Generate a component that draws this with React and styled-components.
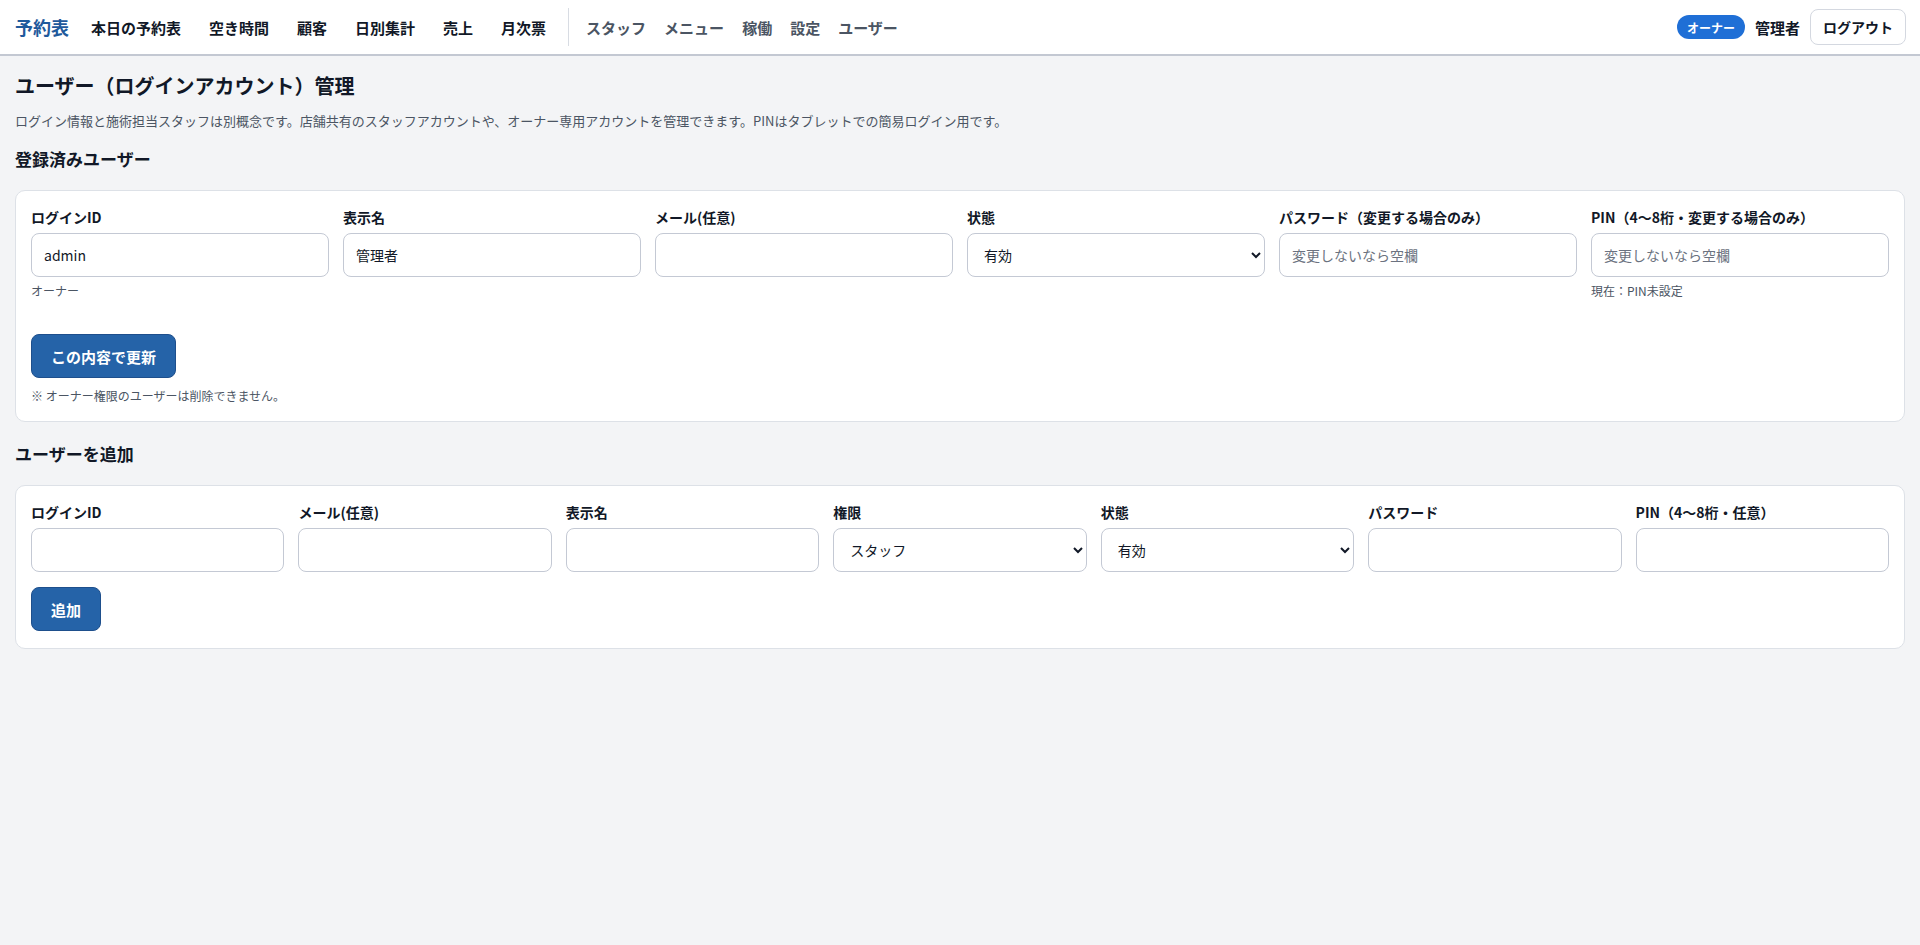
import React from "react";
import styled, { createGlobalStyle } from "styled-components";

const GlobalStyle = createGlobalStyle`
  * { box-sizing: border-box; }
  html, body {
    margin: 0;
    padding: 0;
    background: #f3f4f6;
    color: #1f2937;
    font-family: "Noto Sans CJK JP", "Noto Sans", sans-serif;
  }
`;

const Header = styled.header`
  display: flex;
  align-items: center;
  height: 56px;
  padding: 0 14px 0 15px;
  background: #ffffff;
  border-bottom: 2px solid #c3c8d2;
`;

const Brand = styled.div`
  font-size: 18px;
  font-weight: 700;
  color: #1f5a9c;
  margin-right: 8px;
  white-space: nowrap;
`;

const Nav = styled.nav`
  display: flex;
  align-items: center;
  align-self: stretch;
`;

const NavLink = styled.a`
  font-size: 15px;
  font-weight: 700;
  color: ${(p) => (p.$sub ? "#4b5563" : "#111827")};
  padding: 0 ${(p) => (p.$sub ? "9px" : "14px")};
  text-decoration: none;
  white-space: nowrap;
  cursor: pointer;
`;

const Divider = styled.span`
  width: 1px;
  height: 38px;
  background: #d8dce3;
  margin: 0 8px;
`;

const HeaderRight = styled.div`
  margin-left: auto;
  display: flex;
  align-items: center;
  gap: 10px;
`;

const RoleBadge = styled.span`
  display: inline-flex;
  align-items: center;
  height: 24px;
  padding: 0 10px;
  border-radius: 999px;
  background: #1f6fd6;
  color: #ffffff;
  font-size: 12px;
  font-weight: 700;
`;

const UserName = styled.span`
  font-size: 15px;
  font-weight: 700;
  color: #111827;
`;

const LogoutButton = styled.button`
  height: 36px;
  padding: 0 12px;
  border: 1px solid #d4d8e0;
  border-radius: 8px;
  background: #ffffff;
  font-family: inherit;
  font-size: 14px;
  font-weight: 700;
  color: #111827;
  cursor: pointer;
`;

const Main = styled.main`
  padding: 16px 15px 24px;
`;

const Title = styled.h1`
  margin: 0;
  font-size: 20px;
  line-height: 28px;
  font-weight: 700;
  color: #111827;
`;

const Lead = styled.p`
  margin: 11px 0 0;
  font-size: 13px;
  line-height: 20px;
  color: #4b5563;
`;

const SectionTitle = styled.h2`
  margin: ${(p) => p.$top || "16px"} 0 19px;
  font-size: 17px;
  line-height: 24px;
  font-weight: 700;
  color: #111827;
`;

const Card = styled.section`
  background: #ffffff;
  border: 1px solid #dde1e7;
  border-radius: 10px;
  padding: 16px 15px 17px;
`;

const FieldGrid = styled.div`
  display: grid;
  grid-template-columns: repeat(${(p) => p.$cols}, 1fr);
  gap: 14px;
`;

const Field = styled.div`
  display: flex;
  flex-direction: column;
  min-width: 0;
`;

const Label = styled.label`
  font-size: 14px;
  line-height: 20px;
  font-weight: 700;
  color: #111827;
  margin-bottom: 6px;
  white-space: nowrap;
`;

const TextInput = styled.input`
  width: 100%;
  height: 44px;
  padding: 0 12px;
  border: 1px solid #c4c9d4;
  border-radius: 8px;
  background: #ffffff;
  font-family: inherit;
  font-size: 14px;
  color: #111827;
  outline: none;
  &::placeholder { color: #6b7280; }
`;

const Select = styled.select`
  width: 100%;
  height: 44px;
  padding: 0 8px 0 12px;
  border: 1px solid #c4c9d4;
  border-radius: 8px;
  background: #ffffff;
  font-family: inherit;
  font-size: 14px;
  color: #111827;
  outline: none;
`;

const Help = styled.div`
  margin-top: 6px;
  font-size: 12px;
  line-height: 16px;
  color: #4b5563;
  min-height: 16px;
`;

const Actions = styled.div`
  margin-top: ${(p) => p.$top || "15px"};
`;

const PrimaryButton = styled.button`
  height: 44px;
  padding: 0 19px;
  border: 1px solid #1e4f8c;
  border-radius: 8px;
  background: #2563a8;
  color: #ffffff;
  font-family: inherit;
  font-size: 15px;
  font-weight: 700;
  cursor: pointer;
`;

const Note = styled.p`
  margin: 10px 0 0;
  font-size: 12px;
  line-height: 16px;
  color: #4b5563;
`;

const mainLinks = ["本日の予約表", "空き時間", "顧客", "日別集計", "売上", "月次票"];
const subLinks = ["スタッフ", "メニュー", "稼働", "設定", "ユーザー"];

export default function App() {
  return (
    <>
      <GlobalStyle />
      <Header>
        <Brand>予約表</Brand>
        <Nav>
          {mainLinks.map((l) => (
            <NavLink key={l}>{l}</NavLink>
          ))}
        </Nav>
        <Divider />
        <Nav>
          {subLinks.map((l) => (
            <NavLink key={l} $sub>{l}</NavLink>
          ))}
        </Nav>
        <HeaderRight>
          <RoleBadge>オーナー</RoleBadge>
          <UserName>管理者</UserName>
          <LogoutButton>ログアウト</LogoutButton>
        </HeaderRight>
      </Header>

      <Main>
        <Title>ユーザー（ログインアカウント）管理</Title>
        <Lead>
          ログイン情報と施術担当スタッフは別概念です。店舗共有のスタッフアカウントや、オーナー専用アカウントを管理できます。PINはタブレットでの簡易ログイン用です。
        </Lead>

        <SectionTitle>登録済みユーザー</SectionTitle>
        <Card>
          <FieldGrid $cols={6}>
            <Field>
              <Label>ログインID</Label>
              <TextInput defaultValue="admin" />
              <Help>オーナー</Help>
            </Field>
            <Field>
              <Label>表示名</Label>
              <TextInput defaultValue="管理者" />
            </Field>
            <Field>
              <Label>メール(任意)</Label>
              <TextInput />
            </Field>
            <Field>
              <Label>状態</Label>
              <Select defaultValue="active">
                <option value="active">有効</option>
                <option value="inactive">無効</option>
              </Select>
            </Field>
            <Field>
              <Label>パスワード（変更する場合のみ）</Label>
              <TextInput type="password" placeholder="変更しないなら空欄" />
            </Field>
            <Field>
              <Label>PIN（4〜8桁・変更する場合のみ）</Label>
              <TextInput placeholder="変更しないなら空欄" />
              <Help>現在：PIN未設定</Help>
            </Field>
          </FieldGrid>
          <Actions $top="35px">
            <PrimaryButton>この内容で更新</PrimaryButton>
          </Actions>
          <Note>※ オーナー権限のユーザーは削除できません。</Note>
        </Card>

        <SectionTitle $top="20px">ユーザーを追加</SectionTitle>
        <Card>
          <FieldGrid $cols={7}>
            <Field>
              <Label>ログインID</Label>
              <TextInput />
            </Field>
            <Field>
              <Label>メール(任意)</Label>
              <TextInput />
            </Field>
            <Field>
              <Label>表示名</Label>
              <TextInput />
            </Field>
            <Field>
              <Label>権限</Label>
              <Select defaultValue="staff">
                <option value="staff">スタッフ</option>
                <option value="owner">オーナー</option>
              </Select>
            </Field>
            <Field>
              <Label>状態</Label>
              <Select defaultValue="active">
                <option value="active">有効</option>
                <option value="inactive">無効</option>
              </Select>
            </Field>
            <Field>
              <Label>パスワード</Label>
              <TextInput type="password" />
            </Field>
            <Field>
              <Label>PIN（4〜8桁・任意）</Label>
              <TextInput />
            </Field>
          </FieldGrid>
          <Actions>
            <PrimaryButton>追加</PrimaryButton>
          </Actions>
        </Card>
      </Main>
    </>
  );
}
